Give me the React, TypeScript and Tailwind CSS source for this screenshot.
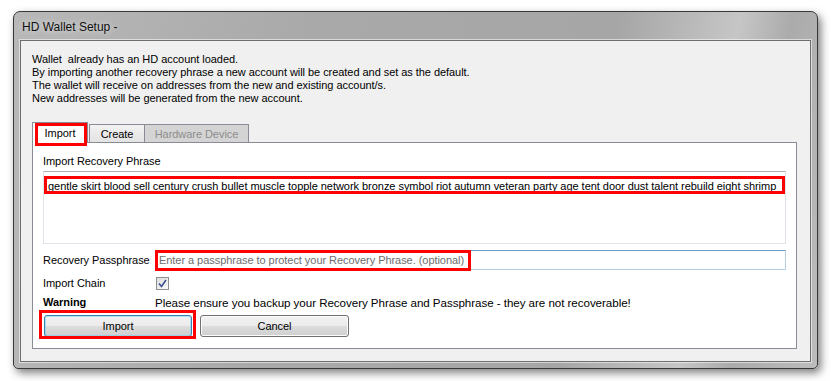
import React from 'react';

const phrase =
  'gentle skirt blood sell century crush bullet muscle topple network bronze symbol riot autumn veteran party age tent door dust talent rebuild eight shrimp';

const intro = [
  'Wallet  already has an HD account loaded.',
  'By importing another recovery phrase a new account will be created and set as the default.',
  'The wallet will receive on addresses from the new and existing account/s.',
  'New addresses will be generated from the new account.',
];

// red annotation frame drawn over a control
function Mark({ className }: { className: string }) {
  return <div className={`pointer-events-none absolute border-[3px] border-[#ff0000] ${className}`} />;
}

function WinButton({ label, isDefault }: { label: string; isDefault?: boolean }) {
  return (
    <button
      className={`h-[22px] rounded-[3px] border bg-[linear-gradient(#f2f2f2_0%,#ebebeb_50%,#dddddd_50%,#cfcfcf_100%)] text-[11px] text-black ${
        isDefault
          ? 'w-[148px] border-[#3c7fb1] shadow-[inset_0_0_0_1px_#48d5fc66]'
          : 'w-[149px] border-[#707070] shadow-[inset_0_0_0_1px_#fcfcfc]'
      }`}
    >
      {label}
    </button>
  );
}

function Tabs() {
  return (
    <div className="flex h-[20px] items-end">
      <div className="relative z-10 -mb-px flex h-[21px] w-[56px] items-start justify-center border border-b-0 border-[#898c95] bg-white pt-[4px]">
        Import
        <Mark className="left-[2px] top-0 h-[23px] w-[52px]" />
      </div>
      <div className="ml-px flex h-[18px] w-[56px] items-center justify-center border border-b-0 border-[#898c95] bg-[linear-gradient(#f2f2f2,#e3e3e3)] pt-[2px]">
        Create
      </div>
      <div className="-ml-px flex h-[18px] w-[105px] items-center justify-center border border-b-0 border-[#898c95] bg-[#d4d4d4] pt-[2px] text-[#8d8d8d]">
        Hardware Device
      </div>
    </div>
  );
}

export default function App() {
  return (
    <div
      className="h-[381px] w-[831px] overflow-hidden bg-white pl-[13px] pt-[11px] text-[11px] leading-[13px] tracking-[-0.05px] text-black"
      style={{ fontFamily: '"Liberation Sans", Arial, sans-serif' }}
    >
      <div className="flex h-[358px] w-[805px] flex-col rounded-t-[7px] rounded-b-[5px] border border-[#383838] bg-[linear-gradient(100deg,#b8b8b8_0%,#a9a9a9_35%,#a6a6a6_70%,#c6c6c6_84%,#ababab_90%,#bcbcbc_100%)] shadow-[3px_4px_9px_rgba(0,0,0,0.5)]">
        {/* title bar */}
        <div className="flex h-[28px] items-center pl-[8px] pt-[2px] text-[12px] tracking-normal text-[#111] [text-shadow:0_0_6px_rgba(255,255,255,0.8)]">
          HD Wallet Setup -
        </div>

        {/* client area */}
        <div className="mx-[6px] mb-[6px] flex-1 border border-[#6e6e6e] bg-[#f0f0f0] pl-[11px] pr-[13px] pt-[12px] shadow-[0_0_0_1px_rgba(255,255,255,0.55)]">
          <div>
            {intro.map((line) => (
              <div key={line} className="whitespace-pre">
                {line}
              </div>
            ))}
          </div>

          <div className="mt-[17px]">
            <Tabs />

            {/* tab page */}
            <div className="h-[207px] border border-[#898c95] bg-white px-[10px] pt-[12px]">
              <div>Import Recovery Phrase</div>

              <div className="relative mt-[3px] h-[73px] border border-[#dfe3ea] border-t-[#abadb3] pl-[4px] pt-[8px]">
                <div className="whitespace-nowrap tracking-[-0.04px]">{phrase}</div>
                <Mark className="left-0 top-[4px] h-[18px] w-[741px]" />
              </div>

              <div className="mt-[6px] flex items-center">
                <div className="w-[112px]">Recovery Passphrase</div>
                <div className="relative flex h-[20px] flex-1 items-center border border-[#b6cfe6] border-t-[#6f9cc4] pl-[3px] text-[#6d6d6d]">
                  Enter a passphrase to protect your Recovery Phrase. (optional)
                  <Mark className="-left-px -top-px h-[21px] w-[316px]" />
                </div>
              </div>

              <div className="mt-[7px] flex h-[13px] items-center">
                <div className="w-[113px]">Import Chain</div>
                <div className="flex h-[13px] w-[13px] items-center justify-center border border-[#8f8f8f] bg-[linear-gradient(135deg,#dcdcdc,#fbfbfb)]">
                  <svg width="9" height="9" viewBox="0 0 9 9">
                    <path d="M1 4.5 L3.5 7.5 L8 1" fill="none" stroke="#3b4f92" strokeWidth="1.6" />
                  </svg>
                </div>
              </div>

              <div className="mt-[6px] flex items-center">
                <div className="w-[112px] font-bold">Warning</div>
                <div className="text-[11.6px]">
                  Please ensure you backup your Recovery Phrase and Passphrase - they are not recoverable!
                </div>
              </div>

              <div className="mt-[6px] flex gap-[8px] pl-px">
                <div className="relative">
                  <WinButton label="Import" isDefault />
                  <Mark className="-left-[5px] -top-[5px] h-[29px] w-[157px]" />
                </div>
                <WinButton label="Cancel" />
              </div>
            </div>
          </div>
        </div>
      </div>
    </div>
  );
}
